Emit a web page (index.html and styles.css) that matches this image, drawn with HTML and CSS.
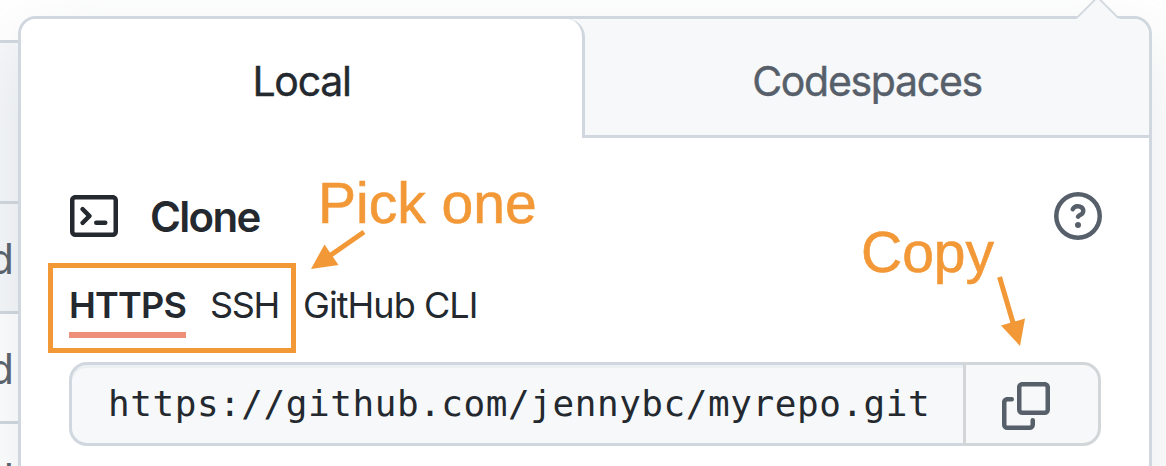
FILE: index.html
```html
<!DOCTYPE html>
<html lang="en">
<head>
<meta charset="utf-8">
<title>Clone</title>
<link rel="stylesheet" href="styles.css">
</head>
<body>
<div class="stage">
  <div class="files">
    <div class="files-head"></div>
    <div class="file tinted"><span>d</span></div>
    <div class="file"><span>d</span></div>
    <div class="file"><span>d</span></div>
  </div>
  <main class="popover">
    <nav class="tabs">
      <div class="tab-space"><div class="tab active"><span class="t-local">Local</span></div></div>
      <div class="tab other"><span class="t-code">Codespaces</span></div>
    </nav>
    <section class="panel">
      <header class="heading">
        <svg class="icon dark" viewBox="0 0 16 16"><path fill-rule="evenodd" d="M0 2.75C0 1.784.784 1 1.75 1h12.5c.966 0 1.75.784 1.75 1.75v10.5A1.75 1.75 0 0 1 14.25 15H1.75A1.75 1.75 0 0 1 0 13.25V2.75zm1.75-.25a.25.25 0 0 0-.25.25v10.5c0 .138.112.25.25.25h12.5a.25.25 0 0 0 .25-.25V2.75a.25.25 0 0 0-.25-.25H1.75zM7.25 8a.75.75 0 0 1-.22.53l-2.25 2.25a.75.75 0 1 1-1.06-1.06L5.44 8 3.72 6.28a.75.75 0 1 1 1.06-1.06l2.25 2.25c.141.14.22.331.22.53zm1.5 1.5a.75.75 0 0 0 0 1.5h3a.75.75 0 0 0 0-1.5h-3z"/></svg>
        <h1><span class="t-clone">Clone</span></h1>
        <svg class="icon help" viewBox="0 0 16 16"><path fill-rule="evenodd" d="M8 1.5a6.5 6.5 0 1 0 0 13 6.5 6.5 0 0 0 0-13zM0 8a8 8 0 1 1 16 0A8 8 0 0 1 0 8zm9 3a1 1 0 1 1-2 0 1 1 0 0 1 2 0zM6.92 6.085c.081-.16.19-.299.34-.398.145-.097.371-.187.74-.187.28 0 .553.087.738.225A.613.613 0 0 1 9 6.25c0 .177-.04.264-.077.318a.956.956 0 0 1-.277.245c-.076.051-.158.1-.258.161l-.007.004a7.728 7.728 0 0 0-.313.195 2.416 2.416 0 0 0-.692.661.75.75 0 0 0 1.248.832.956.956 0 0 1 .276-.245 6.3 6.3 0 0 1 .26-.16l.006-.004c.093-.057.204-.123.313-.195.222-.149.487-.355.692-.662.214-.32.329-.702.329-1.15 0-.76-.36-1.348-.863-1.725A2.76 2.76 0 0 0 8 4c-.631 0-1.155.16-1.572.438-.413.276-.68.638-.849.977a.75.75 0 1 0 1.342.67z"/></svg>
      </header>
      <div class="methods">
        <span class="method selected">HTTPS</span>
        <span class="method ssh">SSH</span>
        <span class="method cli">GitHub CLI</span>
      </div>
      <div class="field">
        <div class="url"><span>https://github.com/jennybc/myrepo.git</span></div>
        <div class="copy"><svg class="icon" viewBox="0 0 16 16"><path fill-rule="evenodd" d="M0 6.75C0 5.784.784 5 1.75 5h1.5a.75.75 0 0 1 0 1.5h-1.5a.25.25 0 0 0-.25.25v7.5c0 .138.112.25.25.25h7.5a.25.25 0 0 0 .25-.25v-1.5a.75.75 0 0 1 1.5 0v1.5A1.75 1.75 0 0 1 9.25 16h-7.5A1.75 1.75 0 0 1 0 14.25v-7.5z"/><path fill-rule="evenodd" d="M5 1.75C5 .784 5.784 0 6.75 0h7.5C15.216 0 16 .784 16 1.75v7.5A1.75 1.75 0 0 1 14.25 11h-7.5A1.75 1.75 0 0 1 5 9.25v-7.5zm1.75-.25a.25.25 0 0 0-.25.25v7.5c0 .138.112.25.25.25h7.5a.25.25 0 0 0 .25-.25v-7.5a.25.25 0 0 0-.25-.25h-7.5z"/></svg></div>
      </div>
    </section>
  </main>
  <svg class="caret" viewBox="0 0 44 19"><path fill="#f6f8fa" d="M0 19 22-3l22 22z"/><path fill="none" stroke="#d0d7de" stroke-width="1.8" d="M.5 18.2 21.5-2.8 42.5 18.2"/></svg>
  <div class="mark-box"></div>
  <span class="note pick">Pick one</span>
  <span class="note copy-note">Copy</span>
  <svg class="arrows" viewBox="0 0 1166 466">
    <path d="M364 232 328 257M999.500 277 1014 326"/>
    <polygon points="311,269 324.500,244.500 338.500,265"/>
    <polygon points="1020,346 1001,325.500 1025,318.500"/>
  </svg>
</div>
</body>
</html>
```
FILE: styles.css
```css
* { box-sizing: border-box; }
body { margin: 0; background: #fff; color: #24292f; font: 42px/60px Inter, "Liberation Sans", sans-serif; }
.stage { position: relative; width: 1166px; height: 466px; overflow: hidden; }
.files { width: 30px; padding-top: 40px; }
.files-head { height: 161px; border-top: 3px solid #d0d7de; background: #f6f8fa; }
.file { height: 110px; border-top: 3px solid #d0d7de; padding: 25px 16px 0 0; display: flex; justify-content: flex-end; color: #57606a; }
.tinted { background: #f6f8fa; }
.popover { position: absolute; left: 18px; top: 16px; width: 1134px; height: 520px; border: 3px solid #d0d7de; border-radius: 18px; background: #fff; box-shadow: 0 24px 72px rgba(140,149,159,.2); }
.tabs { display: grid; grid-template-columns: 564px 1fr; height: 119px; background: #f6f8fa; border-radius: 15px 15px 0 0; font-size: 41px; line-height: 60px; }
.tab-space { height: 119px; }
.tab { display: flex; justify-content: center; padding-top: 32px; height: 119px; }
.active { background: #fff; border-right: 3px solid #d0d7de; border-radius: 15px 18px 0 0; }
.other { border-bottom: 3px solid #d0d7de; color: #57606a; }
.panel { padding: 54px 47px 0 48px; }
.heading { display: flex; align-items: center; height: 48px; }
.icon { width: 48px; height: 48px; fill: #57606a; flex: none; }
.dark { fill: #24292f; margin-left: 1px; }
.help { margin-left: auto; }
h1 { margin: 2px 0 0 32px; font-size: 42px; font-weight: 600; line-height: 60px; }
.methods { display: flex; height: 98px; margin-top: 24px; font-size: 36px; line-height: 50px; padding-top: 16px; }
.method { height: 58px; white-space: nowrap; letter-spacing: -.8px; }
.selected { width: 117px; font-weight: 600; border-bottom: 6px solid #ee9079; }
.ssh { margin-left: 24px; width: 70px; letter-spacing: -1.4px; }
.cli { margin-left: 23px; letter-spacing: -.95px; }
.field { display: flex; width: 1032px; height: 84px; }
.url { width: 894px; height: 84px; border: 3px solid #d0d7de; border-right: 0; border-radius: 18px 0 0 18px; background: #f6f8fa; box-shadow: inset 0 3px 0 #edf0f3; padding: 9px 0 0 36px; font: 36px/60px "DejaVu Sans Mono", monospace; letter-spacing: .55px; white-space: nowrap; }
.copy { width: 138px; border: 3px solid #d3d6d8; border-radius: 0 18px 18px 0; background: #f6f8fa; padding: 17px 0 0 36px; }
.copy .icon { display: block; }
.caret { position: absolute; left: 1076px; top: 0; width: 44px; height: 19px; }
.mark-box { position: absolute; left: 48px; top: 263px; width: 248px; height: 90px; border: 5px solid #f29837; }
.note { position: absolute; color: #f29837; font: 57px/64px "Liberation Sans", sans-serif; white-space: nowrap; -webkit-text-stroke: .6px #f29837; }
.pick { left: 318px; top: 171px; }
.copy-note { left: 861px; top: 220px; }
.arrows { position: absolute; left: 0; top: 0; width: 1166px; height: 466px; fill: #f29837; }
.arrows path { stroke: #f29837; stroke-width: 5; }
.t-local, .t-code { letter-spacing: -1.3px; -webkit-text-stroke: .4px currentColor; }
.t-clone { letter-spacing: -1.7px; }
```
